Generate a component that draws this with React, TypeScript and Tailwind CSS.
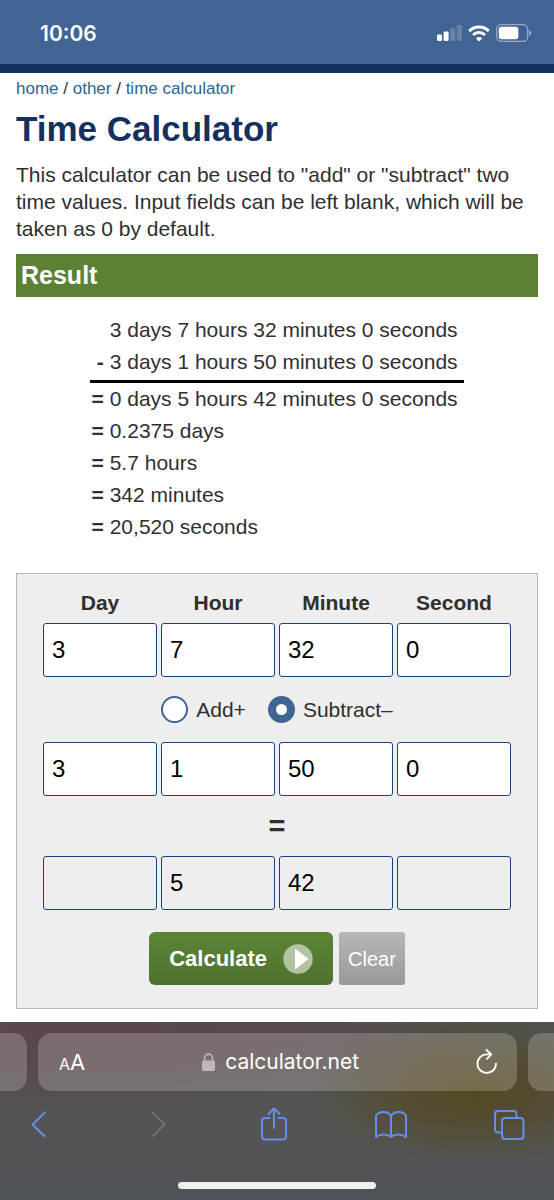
import { useState } from "react";

const units = ["Day", "Hour", "Minute", "Second"];

const resultRows = [
  { sign: "", text: "3 days 7 hours 32 minutes 0 seconds" },
  { sign: "-", text: "3 days 1 hours 50 minutes 0 seconds" },
  { sign: "=", text: "0 days 5 hours 42 minutes 0 seconds" },
  { sign: "=", text: "0.2375 days" },
  { sign: "=", text: "5.7 hours" },
  { sign: "=", text: "342 minutes" },
  { sign: "=", text: "20,520 seconds" },
];

function StatusBar() {
  return (
    <div className="flex h-16 items-center justify-between bg-[#416494] pr-[22px] pl-10 font-['Inter',sans-serif] text-white">
      <span className="pt-1 text-[21px] leading-6 font-semibold">10:06</span>
      <div className="flex items-center gap-1.5 pt-0.5">
        <svg width="25" height="16" viewBox="0 0 25 16" fill="currentColor" aria-hidden="true">
          <rect x="0" y="9.5" width="5" height="6.5" rx="1.3" />
          <rect x="6.6" y="6.5" width="5" height="9.5" rx="1.3" />
          <rect x="13.2" y="3.3" width="5" height="12.7" rx="1.3" opacity=".2" />
          <rect x="19.8" y="0" width="5" height="16" rx="1.3" opacity=".2" />
        </svg>
        <svg width="22" height="17" viewBox="0 0 22 17" fill="none" stroke="currentColor" strokeWidth="3" aria-hidden="true">
          <path d="M1.2 6.1a14 14 0 0 1 19.6 0" />
          <path d="M5 10a8.6 8.6 0 0 1 12 0" />
          <path d="M11 16.6 7.9 13.4a4.5 4.5 0 0 1 6.2 0z" fill="currentColor" stroke="none" />
        </svg>
        <svg width="36" height="18" viewBox="0 0 36 18" aria-hidden="true">
          <rect x=".7" y=".7" width="31" height="16.6" rx="4.5" fill="none" stroke="#fff" strokeOpacity=".45" strokeWidth="1.3" />
          <rect x="2.8" y="2.8" width="19.5" height="12.4" rx="2.6" fill="#fff" />
          <path d="M33.3 6.3c2.6.9 2.6 4.5 0 5.4z" fill="#fff" fillOpacity=".5" />
        </svg>
      </div>
    </div>
  );
}

function TimeInputs({ name, values, readOnly = false }: { name: string; values: string[]; readOnly?: boolean }) {
  return (
    <div className="grid grid-cols-4 gap-1">
      {values.map((value, i) => (
        <input
          key={units[i]}
          type="text"
          inputMode="decimal"
          aria-label={`${name} ${units[i]}`}
          defaultValue={value}
          readOnly={readOnly}
          className={`h-[54px] w-full min-w-0 rounded-[3px] border border-[#1d4080] px-2 text-2xl text-black ${readOnly ? "bg-[#eee]" : "bg-white"}`}
        />
      ))}
    </div>
  );
}

function OperationRadio({ label, checked, onSelect }: { label: string; checked: boolean; onSelect: () => void }) {
  return (
    <label className="flex items-center gap-2">
      <input
        type="radio"
        name="operation"
        checked={checked}
        onChange={onSelect}
        className="size-[27px] appearance-none rounded-full border-2 border-[#416494] bg-white checked:border-8"
      />
      {label}
    </label>
  );
}

function BrowserBar() {
  return (
    <footer className="bg-[radial-gradient(ellipse_170px_75px_at_86%_38%,#544820_0%,#54482090_50%,transparent_100%),radial-gradient(ellipse_420px_80px_at_15%_5%,#5b464a_0%,#5b464ab0_50%,transparent_100%),linear-gradient(#505250,#545454_60%,#4e5358)] pt-[11px] font-['Inter',sans-serif] text-white">
      <div className="flex h-[58px] gap-[11px]">
        <div className="w-[27px] rounded-r-[14px] bg-white/20" />
        <div className="flex flex-1 items-center justify-between rounded-[14px] bg-white/20 pr-[19px] pl-[21px]">
          <button type="button" aria-label="Page settings" className="flex items-baseline leading-7">
            <span className="text-base">A</span>
            <span className="text-[22px]">A</span>
          </button>
          <a href="https://calculator.net" className="flex items-center gap-2.5 text-[21px] leading-7">
            <svg width="13" height="18" viewBox="0 0 13 18" className="text-[#bdb8bb]" aria-hidden="true">
              <rect x="0" y="7.5" width="13" height="10.5" rx="1.8" fill="currentColor" />
              <path d="M2.6 8V5a3.9 3.9 0 0 1 7.8 0v3" fill="none" stroke="currentColor" strokeWidth="1.6" />
            </svg>
            calculator.net
          </a>
          <button type="button" aria-label="Reload">
            <svg width="22" height="26" viewBox="0 0 22 26" fill="none" stroke="currentColor" strokeWidth="1.9" strokeLinecap="round" strokeLinejoin="round">
              <path d="M15 5.400H10.700A9.300 9.300 0 1 0 20 14.700" />
              <path d="M10.500 1 15.200 5.400 11 9.800" />
            </svg>
          </button>
        </div>
        <div className="w-[26px] rounded-l-[14px] bg-white/20" />
      </div>
      <nav aria-label="Browser" className="flex items-center justify-between pt-4 pr-[29px] pl-[22px] text-[#648eea]">
        <button type="button" aria-label="Back">
          <svg width="32" height="34" viewBox="0 0 32 34" fill="none" stroke="currentColor" strokeWidth="2.2" strokeLinecap="round" strokeLinejoin="round">
            <path d="M22.5 6 10.5 17.5l12 11.5" />
          </svg>
        </button>
        <button type="button" aria-label="Forward" disabled className="text-[#727272]">
          <svg width="32" height="34" viewBox="0 0 32 34" fill="none" stroke="currentColor" strokeWidth="2" strokeLinecap="round" strokeLinejoin="round">
            <path d="M12.8 6l12 11.5-12 11.5" />
          </svg>
        </button>
        <button type="button" aria-label="Share">
          <svg width="32" height="34" viewBox="0 0 32 34" fill="none" stroke="currentColor" strokeWidth="2" strokeLinecap="round" strokeLinejoin="round">
            <path d="M11.5 11H7a3 3 0 0 0-3 3v15.5a3 3 0 0 0 3 3h18a3 3 0 0 0 3-3V14a3 3 0 0 0-3-3h-4.500" />
            <path d="M16 21V1.500M10.500 7 16 1.500 21.500 7" />
          </svg>
        </button>
        <button type="button" aria-label="Bookmarks">
          <svg width="32" height="34" viewBox="0 0 32 34" fill="none" stroke="currentColor" strokeWidth="2" strokeLinecap="round" strokeLinejoin="round">
            <path d="M16 9C14.500 6.500 11.500 5 8.500 5 5 5 2.500 6.300 1 8.500V30c2-1.700 4.500-2.600 7.500-2.600s5.700.900 7.500 2.600c1.800-1.700 4.500-2.600 7.500-2.600s5.500.900 7.500 2.600V8.500C29.500 6.300 27 5 23.500 5c-3 0-6 1.500-7.500 4zM16 9v21" />
          </svg>
        </button>
        <button type="button" aria-label="Tabs">
          <svg width="32" height="34" viewBox="0 0 32 34" fill="none" stroke="currentColor" strokeWidth="2" strokeLinejoin="round">
            <path d="M8.500 25.500H5a3 3 0 0 1-3-3V7a3 3 0 0 1 3-3h15.500a3 3 0 0 1 3 3v3.500" />
            <rect x="9" y="11" width="21.500" height="21" rx="3" />
          </svg>
        </button>
      </nav>
      <div className="px-4 pt-[41px] pb-3">
        <div className="mx-auto h-[7px] w-[198px] rounded-full bg-[#eeefef]" />
      </div>
    </footer>
  );
}

export default function App() {
  const [operation, setOperation] = useState("subtract");

  return (
    <div className="bg-white font-['Liberation_Sans',Arial,sans-serif] text-[21px] leading-[27px] text-[#2f2f2f]">
      <header className="border-b-[9px] border-[#13305f]">
        <StatusBar />
      </header>

      <main className="px-4 pt-1 pb-[13px]">
        <nav aria-label="Breadcrumb" className="text-[17px] leading-6 text-[#2b6591]">
          <a href="#home">home</a>
          <span className="text-[#2f2f2f]"> / </span>
          <a href="#other">other</a>
          <span className="text-[#2f2f2f]"> / </span>
          <a href="#time">time calculator</a>
        </nav>
        <h1 className="pt-2 text-[35px] leading-10 font-bold text-[#13305f]">Time Calculator</h1>
        <p className="pt-3">
          This calculator can be used to "add" or "subtract" two time values. Input fields can be left blank, which will
          be taken as 0 by default.
        </p>

        <h2 className="mt-3 bg-[#5c8135] px-[5px] text-[25px] leading-[43px] font-bold text-white">Result</h2>

        <table className="mx-auto mt-[17px] border-collapse">
          <tbody>
            {resultRows.map((row, i) => (
              <tr key={row.text} className={i === 2 ? "border-t-[3px] border-black" : ""}>
                <th scope="row" className={`pr-[6px] pl-px text-right leading-8 ${i === 1 ? "pb-0.5" : ""}`}>
                  {row.sign}
                </th>
                <td className={`pr-[6px] leading-8 ${i === 1 ? "pb-0.5" : ""}`}>{row.text}</td>
              </tr>
            ))}
          </tbody>
        </table>

        <form className="mt-[30px] border border-[#b5b9ba] bg-[#eee] px-[26px] pt-[15px] pb-[23px]" onSubmit={(e) => e.preventDefault()}>
          <div className="grid grid-cols-4 gap-1 pb-[7px] text-center font-bold">
            {units.map((unit) => (
              <span key={unit}>{unit}</span>
            ))}
          </div>
          <TimeInputs name="First" values={["3", "7", "32", "0"]} />
          <div className="flex h-[65px] items-center justify-center gap-[22px]">
            <OperationRadio label="Add+" checked={operation === "add"} onSelect={() => setOperation("add")} />
            <OperationRadio label="Subtract–" checked={operation === "subtract"} onSelect={() => setOperation("subtract")} />
          </div>
          <TimeInputs name="Second" values={["3", "1", "50", "0"]} />
          <div className="text-center text-[29px] leading-[60px] font-bold">=</div>
          <TimeInputs name="Result" values={["", "5", "42", ""]} readOnly />
          <div className="flex justify-center gap-1.5 pt-[22px]">
            <button
              type="submit"
              className="flex h-[53px] items-center gap-4 rounded-md bg-linear-to-b from-[#5c8537] to-[#4e722e] px-5 text-[22px] font-bold text-white"
            >
              Calculate
              <svg width="30" height="30" viewBox="0 0 30 30" aria-hidden="true">
                <circle cx="15" cy="15" r="14.700" fill="#fff" fillOpacity=".55" />
                <path d="M12 4.500v21L25.500 15z" fill="#fff" />
              </svg>
            </button>
            <button type="reset" className="h-[53px] rounded-[3px] bg-linear-to-b from-[#b7b7b7] to-[#999] px-[9px] text-xl text-white">
              Clear
            </button>
          </div>
        </form>
      </main>

      <BrowserBar />
    </div>
  );
}
